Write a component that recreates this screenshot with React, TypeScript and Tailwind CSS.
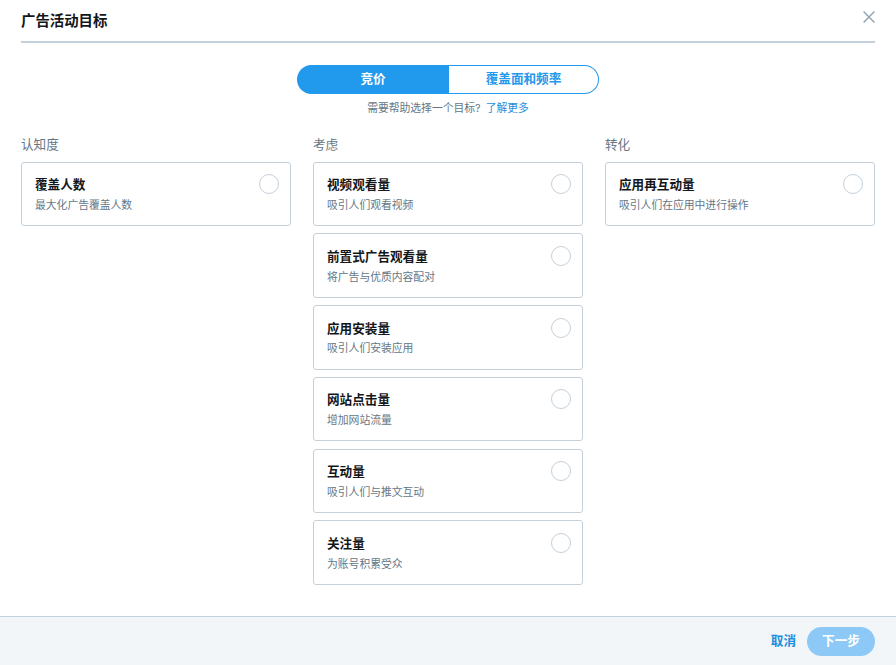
type Objective = {
  title: string;
  description: string;
};

const columns: { label: string; items: Objective[] }[] = [
  {
    label: "认知度",
    items: [{ title: "覆盖人数", description: "最大化广告覆盖人数" }],
  },
  {
    label: "考虑",
    items: [
      { title: "视频观看量", description: "吸引人们观看视频" },
      { title: "前置式广告观看量", description: "将广告与优质内容配对" },
      { title: "应用安装量", description: "吸引人们安装应用" },
      { title: "网站点击量", description: "增加网站流量" },
      { title: "互动量", description: "吸引人们与推文互动" },
      { title: "关注量", description: "为账号积累受众" },
    ],
  },
  {
    label: "转化",
    items: [{ title: "应用再互动量", description: "吸引人们在应用中进行操作" }],
  },
];

function ObjectiveCard({ title, description }: Objective) {
  return (
    <div className="relative h-[64.5px] rounded-[3px] border border-[#c4d0dc] bg-white pl-[13px] pt-[13.5px]">
      <div className="text-[12.6px] leading-[18px] font-bold text-[#14171a]">{title}</div>
      <div className="mt-[3.7px] text-[10.8px] leading-[16px] text-[#657786]">{description}</div>
      <span className="absolute right-[11px] top-[11.5px] h-[20px] w-[20px] rounded-full border border-[#c4d0dc]" />
    </div>
  );
}

export default function App() {
  return (
    <div className="flex h-[665px] w-[896px] flex-col bg-white font-['Inter','Noto_Sans_CJK_SC',sans-serif]">
      <header className="relative mx-[21px] h-[43px] border-b-2 border-[#c4d0dc] pt-[11px]">
        <h1 className="text-[14.4px] leading-[20px] font-bold text-[#14171a]">广告活动目标</h1>
        <button className="absolute right-0 top-[11px] text-[#8fa3b3]">
          <svg viewBox="0 0 12 12" className="block h-[12px] w-[12px]" fill="none" stroke="currentColor" strokeWidth="1.4">
            <path d="M.6.6l10.8 10.8M11.4.6L.6 11.4" />
          </svg>
        </button>
      </header>

      <div className="mt-[22px] flex justify-center">
        <div className="flex h-[29px] w-[302px] text-[12.6px] font-bold">
          <button className="w-[152px] rounded-l-full bg-[#2199ec] text-white">竞价</button>
          <button className="flex-1 rounded-r-full border border-l-0 border-[#2199ec] bg-white text-[#2199ec]">覆盖面和频率</button>
        </div>
      </div>
      <p className="mt-[7px] text-center text-[10.8px] leading-[16px] text-[#657786]">
        需要帮助选择一个目标? <a className="ml-[2px] text-[#1b8fdc]">了解更多</a>
      </p>

      <main className="mt-[18px] flex flex-1 gap-[22px] px-[21px]">
        {columns.map((column) => (
          <section key={column.label} className="w-[270px]">
            <h2 className="mb-[7.6px] text-[12.6px] leading-[19px] text-[#657786]">{column.label}</h2>
            <div className="flex flex-col gap-[7.25px]">
              {column.items.map((item) => (
                <ObjectiveCard key={item.title} {...item} />
              ))}
            </div>
          </section>
        ))}
      </main>

      <footer className="flex h-[49px] items-center justify-end gap-[11px] border-t border-[#c4d0dc] bg-[#f3f6f9] pr-[21px]">
        <button className="text-[12.6px] font-bold text-[#1b8fdc]">取消</button>
        <button className="h-[29px] w-[68px] rounded-full bg-[#8cc9f6] text-[12.6px] font-bold text-white">下一步</button>
      </footer>
    </div>
  );
}
